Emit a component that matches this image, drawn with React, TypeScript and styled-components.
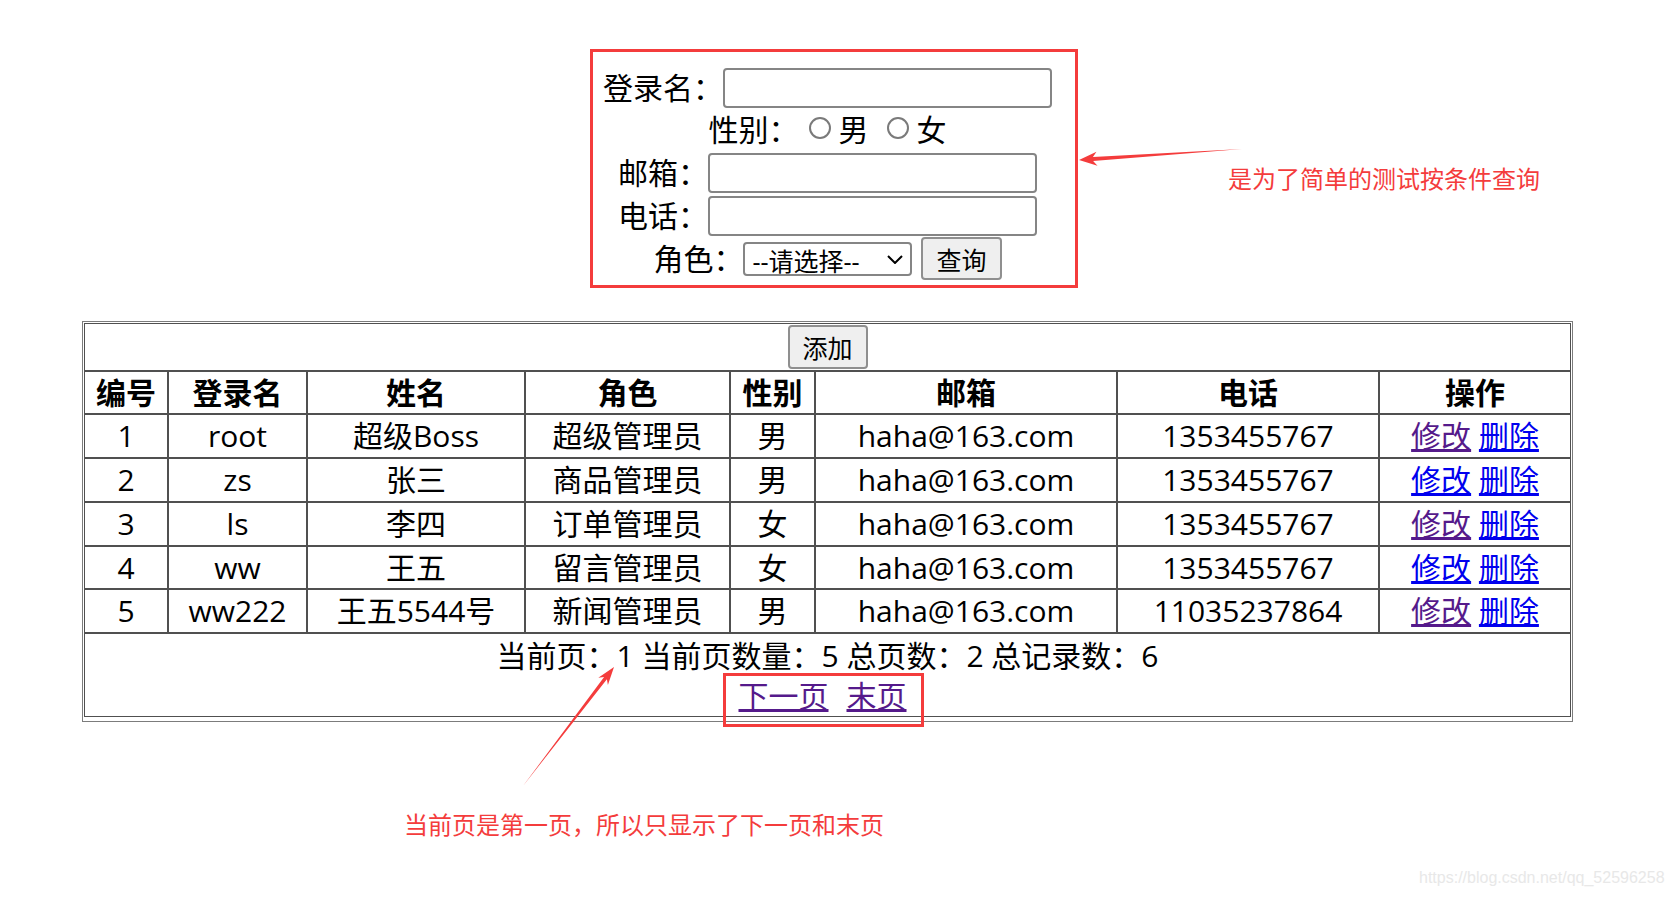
import React from "react";
import styled, { createGlobalStyle } from "styled-components";

const GlobalStyle = createGlobalStyle`
  html, body {
    margin: 0;
    padding: 0;
    background: #fff;
  }
  body {
    font-family: "Open Sans", "Noto Sans CJK SC", sans-serif;
    color: #000;
  }
`;

const Page = styled.div`
  position: relative;
  width: 1672px;
  height: 899px;
  overflow: hidden;
  box-sizing: border-box;
  padding-top: 49px;
  display: flex;
  flex-direction: column;
  align-items: flex-start;
`;

// search form (the red frame is part of the screenshot)
const SearchBox = styled.form`
  margin-left: 590px;
  width: 488px;
  box-sizing: border-box;
  border: 3px solid #f43c3c;
  padding: 14px 13px 5px 0;
  display: flex;
  flex-direction: column;
`;

const FormRow = styled.div<{ $h: number }>`
  height: ${({ $h }) => $h}px;
  display: flex;
  align-items: center;
  justify-content: center;
`;

const Label = styled.span`
  font-size: 30px;
  line-height: 40px;
  white-space: nowrap;
`;

const TextInput = styled.input`
  width: 329px;
  height: 40px;
  box-sizing: border-box;
  margin: 0;
  padding: 0 6px;
  border: 2px solid #858585;
  border-radius: 4px;
  background: #fff;
  font-size: 26px;
  font-family: inherit;
`;

const Radio = styled.input<{ $ml: number }>`
  appearance: none;
  width: 22px;
  height: 22px;
  box-sizing: border-box;
  margin: 0 8px 4px ${({ $ml }) => $ml}px;
  border: 2px solid #7a7a7a;
  border-radius: 50%;
  background: #fff;
`;

const RadioText = styled.span`
  font-size: 30px;
  line-height: 40px;
`;

const SelectWrap = styled.div`
  position: relative;
  display: flex;
`;

const Select = styled.select`
  appearance: none;
  width: 169px;
  height: 34px;
  box-sizing: border-box;
  margin: 0;
  padding: 0 0 0 7px;
  border: 2px solid #858585;
  border-radius: 4px;
  background: #fff;
  color: #000;
  font-size: 25px;
  font-family: inherit;
`;

const Chevron = styled.svg`
  position: absolute;
  right: 9px;
  top: 50%;
  margin-top: -4px;
  width: 16px;
  height: 9px;
  pointer-events: none;
`;

const Button = styled.button<{ $ml?: number }>`
  height: ${({ $ml }) => ($ml ? 43 : 44)}px;
  margin: 0 0 0 ${({ $ml }) => $ml || 0}px;
  padding: 0 13px;
  background: #efefef;
  border: 2px solid #8f8f8f;
  border-radius: 4px;
  color: #000;
  font-size: 25px;
  font-family: inherit;
  white-space: nowrap;
`;

// user table
const DataTable = styled.table`
  margin: 33px 0 0 82px;
  width: 1491px;
  table-layout: fixed;
  border-collapse: separate;
  border-spacing: 0;
  border: 1px solid #7c7c7c;
  padding: 1px 1px 4px 1px;
  font-size: 30px;
`;

const Col = styled.col<{ $w: number }>`
  width: ${({ $w }) => $w}px;
`;

const Row = styled.tr<{ $h: number }>`
  height: ${({ $h }) => $h}px;
`;

const Cell = styled.td`
  border: 1px solid #505050;
  padding: 0;
  text-align: center;
  line-height: 40px;
  white-space: nowrap;
`;

const HeadCell = styled.th`
  border: 1px solid #505050;
  padding: 0;
  text-align: center;
  line-height: 40px;
  font-weight: 700;
  white-space: nowrap;
`;

const FooterCell = styled.td`
  border: 1px solid #505050;
  padding: 2px 0 0 0;
  text-align: center;
  vertical-align: top;
  line-height: 40px;
  white-space: nowrap;
`;

const PagerLinks = styled.div`
  display: flex;
  justify-content: center;
  gap: 18px;
  padding-right: 10px;
`;

const Link = styled.a<{ $visited?: boolean }>`
  color: ${({ $visited }) => ($visited ? "#551a8b" : "#0000ee")};
  text-decoration: underline;
  cursor: pointer;
`;

// annotations drawn over the screenshot
const Overlay = styled.svg`
  position: absolute;
  left: 0;
  top: 0;
  width: 1672px;
  height: 899px;
  pointer-events: none;
`;

const Note = styled.div<{ $x: number; $y: number }>`
  position: absolute;
  left: ${({ $x }) => $x}px;
  top: ${({ $y }) => $y}px;
  font-family: "Noto Sans CJK SC", sans-serif;
  font-size: 24px;
  line-height: 24px;
  color: #f43c3c;
  white-space: nowrap;
`;

const LinkFrame = styled.div`
  position: absolute;
  left: 723px;
  top: 673px;
  width: 201px;
  height: 54px;
  box-sizing: border-box;
  border: 3px solid #f43c3c;
  pointer-events: none;
`;

const Watermark = styled.div`
  position: absolute;
  left: 1419px;
  top: 869px;
  font-family: "Liberation Sans", Arial, sans-serif;
  font-size: 16px;
  line-height: 18px;
  color: #e8e8e8;
  white-space: nowrap;
`;

const users = [
  { id: 1, login: "root", name: "超级Boss", role: "超级管理员", sex: "男", phone: "1353455767", h: 44 },
  { id: 2, login: "zs", name: "张三", role: "商品管理员", sex: "男", phone: "1353455767", h: 44 },
  { id: 3, login: "ls", name: "李四", role: "订单管理员", sex: "女", phone: "1353455767", h: 44 },
  { id: 4, login: "ww", name: "王五", role: "留言管理员", sex: "女", phone: "1353455767", h: 43 },
  { id: 5, login: "ww222", name: "王五5544号", role: "新闻管理员", sex: "男", phone: "11035237864", h: 44 },
];

const colWidths = [84, 139, 218, 205, 85, 302, 262, 192];
const headers = ["编号", "登录名", "姓名", "角色", "性别", "邮箱", "电话", "操作"];

export default function App() {
  return (
    <Page>
      <GlobalStyle />
      <SearchBox onSubmit={e => e.preventDefault()}>
        <FormRow $h={43}>
          <Label>登录名：</Label>
          <TextInput type="text" />
        </FormRow>
        <FormRow $h={42}>
          <Label>性别：</Label>
          <Radio type="radio" name="sex" $ml={10} />
          <RadioText>男</RadioText>
          <Radio type="radio" name="sex" $ml={18} />
          <RadioText>女</RadioText>
        </FormRow>
        <FormRow $h={43}>
          <Label>邮箱：</Label>
          <TextInput type="text" />
        </FormRow>
        <FormRow $h={43}>
          <Label>电话：</Label>
          <TextInput type="text" />
        </FormRow>
        <FormRow $h={43}>
          <Label>角色：</Label>
          <SelectWrap>
            <Select defaultValue="">
              <option value="">--请选择--</option>
            </Select>
            <Chevron viewBox="0 0 16 9">
              <polyline points="1,1 8,8 15,1" fill="none" stroke="#000" strokeWidth="2" />
            </Chevron>
          </SelectWrap>
          <Button type="submit" $ml={9}>查询</Button>
        </FormRow>
      </SearchBox>

      <DataTable>
        <colgroup>
          {colWidths.map((w, i) => (
            <Col key={i} $w={w} />
          ))}
        </colgroup>
        <tbody>
          <Row $h={48}>
            <Cell colSpan={8}>
              <Button type="button">添加</Button>
            </Cell>
          </Row>
          <Row $h={43}>
            {headers.map(h => (
              <HeadCell key={h}>{h}</HeadCell>
            ))}
          </Row>
          {users.map(u => (
            <Row key={u.id} $h={u.h}>
              <Cell>{u.id}</Cell>
              <Cell>{u.login}</Cell>
              <Cell>{u.name}</Cell>
              <Cell>{u.role}</Cell>
              <Cell>{u.sex}</Cell>
              <Cell>haha@163.com</Cell>
              <Cell>{u.phone}</Cell>
              <Cell>
                <Link $visited={u.id % 2 === 1}>修改</Link> <Link>删除</Link>
              </Cell>
            </Row>
          ))}
          <Row $h={83}>
            <FooterCell colSpan={8}>
              <div>当前页：1 当前页数量：5 总页数：2 总记录数：6</div>
              <PagerLinks>
                <Link $visited>下一页</Link>
                <Link $visited>末页</Link>
              </PagerLinks>
            </FooterCell>
          </Row>
        </tbody>
      </DataTable>

      <Overlay viewBox="0 0 1672 899">
        <polygon
          points="1079,160 1097.5,165.8 1093.1,161.1 1242,149 1092.9,157.1 1096.5,151.8"
          fill="#f43c3c"
        />
        <polygon
          points="614,667 607.9,684.9 606.9,679.2 523,786 604.1,677 598.3,677.7"
          fill="#f43c3c"
        />
      </Overlay>
      <LinkFrame />
      <Note $x={1228} $y={166}>是为了简单的测试按条件查询</Note>
      <Note $x={404} $y={812}>当前页是第一页，所以只显示了下一页和末页</Note>
      <Watermark>https://blog.csdn.net/qq_52596258</Watermark>
    </Page>
  );
}
